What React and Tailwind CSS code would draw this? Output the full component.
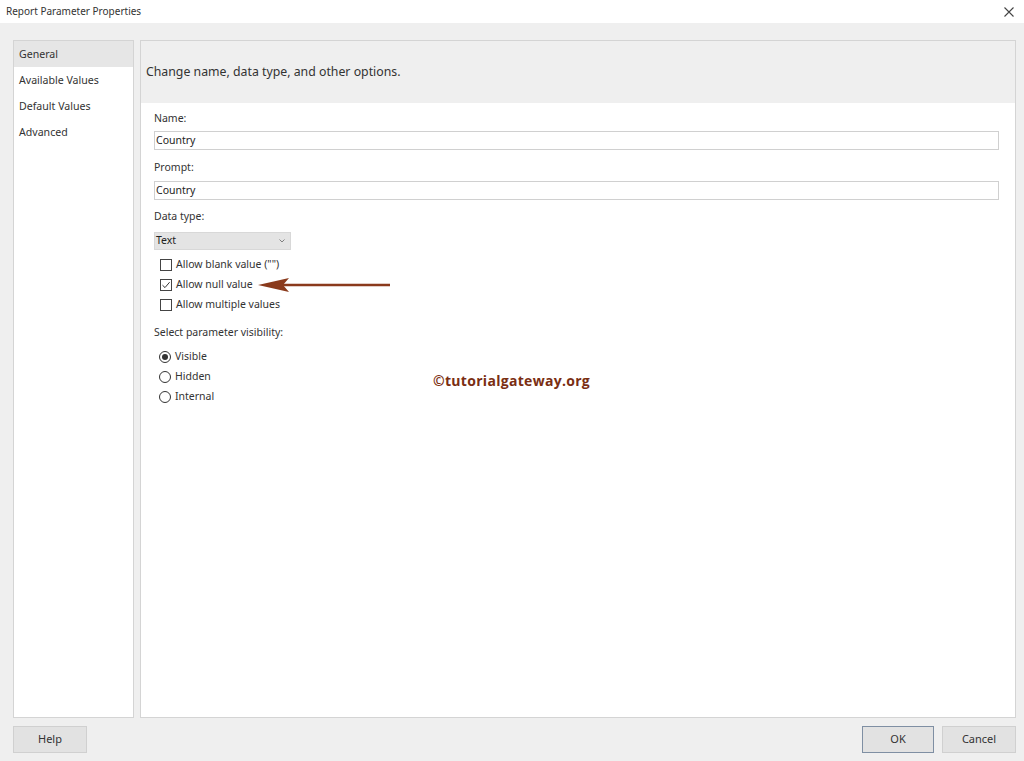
import React from 'react';

const font = { fontFamily: '"Noto Sans", "Open Sans", sans-serif' };

const Check = ({ checked, label }) => (
  <div className="flex items-center h-[20px] pl-[6px]">
    <div className="w-[12px] h-[12px] border border-[#444] bg-white flex items-center justify-center">
      {checked && (
        <svg width="10" height="10" viewBox="0 0 10 10">
          <path d="M1.5 5.2 L4 7.6 L8.6 2.2" fill="none" stroke="#333" strokeWidth="1" />
        </svg>
      )}
    </div>
    <span className="ml-[4px] text-[10.5px] text-[#333]">{label}</span>
  </div>
);

const Radio = ({ checked, label }) => (
  <div className="flex items-center h-[20px] pl-[5px]">
    <div className="w-[12px] h-[12px] rounded-full border border-[#333] bg-white flex items-center justify-center">
      {checked && <div className="w-[6px] h-[6px] rounded-full bg-[#333]" />}
    </div>
    <span className="ml-[4px] text-[10.5px] text-[#333]">{label}</span>
  </div>
);

export default function App() {
  const navItems = ['General', 'Available Values', 'Default Values', 'Advanced'];

  return (
    <div className="w-[1024px] h-[761px] bg-[#efefef] flex flex-col overflow-hidden" style={font}>
      {/* Title bar */}
      <div className="h-[23px] bg-white flex items-center justify-between px-[6px]">
        <span className="text-[10px] text-[#333]">Report Parameter Properties</span>
        <svg width="10" height="10" viewBox="0 0 10 10" className="mr-[4px]">
          <path d="M0.5 0.5 L9.5 9.5 M9.5 0.5 L0.5 9.5" stroke="#444" strokeWidth="1.1" />
        </svg>
      </div>

      {/* Body */}
      <div className="flex gap-[6px] pl-[13px] pr-[8px] pt-[17px] h-[695px]">
        {/* Nav */}
        <div className="w-[121px] h-full bg-white border border-[#d4d4d4] flex flex-col">
          {navItems.map((item, i) => (
            <div
              key={item}
              className={`h-[26px] flex items-center pl-[5px] pt-[2px] text-[10.6px] text-[#333] ${i === 0 ? 'bg-[#e6e6e6]' : ''}`}
            >
              {item}
            </div>
          ))}
        </div>

        {/* Content */}
        <div className="flex-1 h-full bg-white border border-[#d4d4d4] flex flex-col">
          <div className="h-[62px] bg-[#efefef] flex items-center pl-[5px]">
            <span className="text-[12.3px] text-[#333]">Change name, data type, and other options.</span>
          </div>

          <div className="pl-[13px] pr-[16px] pt-[6px] relative flex-1">
            <div className="text-[10.5px] text-[#333] h-[19px] flex items-center">Name:</div>
            <div className="mt-[3px] h-[19px] border border-[#d0d0d0] flex items-center pl-[1px] text-[10.5px] text-[#222]">
              Country
            </div>

            <div className="text-[10.5px] text-[#333] h-[19px] flex items-center mt-[8px]">Prompt:</div>
            <div className="mt-[4px] h-[19px] border border-[#d0d0d0] flex items-center pl-[1px] text-[10.5px] text-[#222]">
              Country
            </div>

            <div className="text-[10.5px] text-[#333] h-[19px] flex items-center mt-[7px]">Data type:</div>
            <div className="mt-[6px] w-[137px] h-[18px] bg-[#e4e4e4] border border-[#d8d8d8] flex items-center justify-between pl-[1px] pr-[5px] text-[10.5px] text-[#222]">
              <span>Text</span>
              <svg width="6" height="4" viewBox="0 0 6 4">
                <path d="M0.5 0.5 L3 3 L5.5 0.5" fill="none" stroke="#666" strokeWidth="0.8" />
              </svg>
            </div>

            <div className="mt-[5px] relative">
              <Check label='Allow blank value ("")' />
              <div className="relative">
                <Check checked label="Allow null value" />
                <svg width="132" height="14" viewBox="0 0 132 14" className="absolute left-[104px] top-[3px]">
                  <path d="M10 7 L132 7" stroke="#8a3a1c" strokeWidth="2.4" />
                  <path d="M0 7 L31 0 L25 7 L31 14 Z" fill="#8a3a1c" />
                </svg>
              </div>
              <Check label="Allow multiple values" />
            </div>

            <div className="text-[10.5px] text-[#333] h-[19px] flex items-center mt-[8px]">Select parameter visibility:</div>
            <div className="mt-[5px]">
              <Radio checked label="Visible" />
              <Radio label="Hidden" />
              <Radio label="Internal" />
            </div>

            <div
              className="absolute left-[292px] top-[267px] text-[14px] font-bold text-[#7a2e12] tracking-[0.3px]"
              style={{ fontFamily: '"Open Sans", "Noto Sans", sans-serif' }}
            >
              ©tutorialgateway.org
            </div>
          </div>
        </div>
      </div>

      {/* Footer */}
      <div className="flex items-center justify-between pl-[13px] pr-[8px] mt-[8px]">
        <button className="w-[74px] h-[27px] bg-[#e2e2e2] border border-[#d0d0d0] text-[11px] text-[#333]">Help</button>
        <div className="flex gap-[8px]">
          <button className="w-[72px] h-[27px] bg-[#e2e2e2] border border-[#7f8fa3] text-[11px] text-[#333]">OK</button>
          <button className="w-[74px] h-[27px] bg-[#e2e2e2] border border-[#d0d0d0] text-[11px] text-[#333]">Cancel</button>
        </div>
      </div>
    </div>
  );
}
